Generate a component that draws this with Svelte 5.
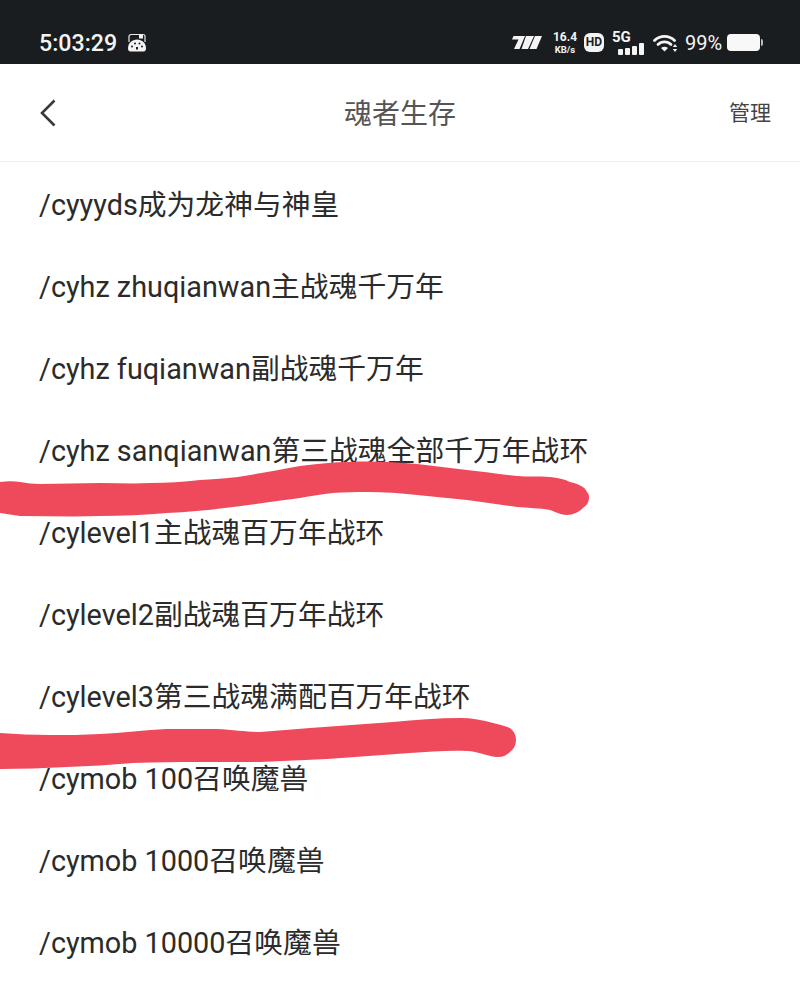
<script>
  const commands = [
    "/cyyyds成为龙神与神皇",
    "/cyhz zhuqianwan主战魂千万年",
    "/cyhz fuqianwan副战魂千万年",
    "/cyhz sanqianwan第三战魂全部千万年战环",
    "/cylevel1主战魂百万年战环",
    "/cylevel2副战魂百万年战环",
    "/cylevel3第三战魂满配百万年战环",
    "/cymob 100召唤魔兽",
    "/cymob 1000召唤魔兽",
    "/cymob 10000召唤魔兽",
  ]
</script>

<div class="screen">
  <div class="status-bar">
    <div class="status-left">
      <span class="clock">5:03:29</span>
      <svg class="dial" viewBox="0 0 20 20" width="20" height="20">
        <path d="M2 9V3.500A2 2 0 0 1 4 1.500H16A2 2 0 0 1 18 3.500V9" fill="none" stroke="#e8e8e8" stroke-width="1.200" />
        <rect x="12" y="1.500" width="4" height="4" fill="#f4f4f4" />
        <path d="M1 15.500C1 10 5 6.500 10 6.500S19 10 19 15.500C19 17.500 18 18.500 16.500 18.500H3.500C2 18.500 1 17.500 1 15.500Z" fill="#f4f4f4" />
        <circle cx="5" cy="13.500" r="1" fill="#1a1d20" />
        <circle cx="8" cy="10.500" r="1" fill="#1a1d20" />
        <circle cx="12.500" cy="10.500" r="1" fill="#1a1d20" />
        <circle cx="15" cy="13.500" r="1" fill="#1a1d20" />
        <rect x="9" y="14" width="2" height="2.500" fill="#1a1d20" />
      </svg>
    </div>
    <div class="status-right">
      <svg class="carrier" viewBox="0 0 30 13" width="30" height="13">
        <path d="M1.500 0H13L7.500 13H2L6.500 3.500H0Z" fill="#f4f4f4" />
        <path d="M14 0H22L16 13H9.500Z" fill="#f4f4f4" />
        <path d="M23 0H30L24.500 13H17.500Z" fill="#f4f4f4" />
      </svg>
      <div class="speed">
        <span class="speed-num">16.4</span>
        <span class="speed-unit">KB/s</span>
      </div>
      <span class="hd">HD</span>
      <div class="signal">
        <span class="five-g">5G</span>
        <div class="bars">
          <i style="height: 6px"></i>
          <i style="height: 7px"></i>
          <i style="height: 9px"></i>
          <i style="height: 12px"></i>
        </div>
      </div>
      <svg class="wifi" viewBox="0 0 25 18" width="25" height="18">
        <path d="M1.500 6.500C7 1 16 1 21.500 6.500" fill="none" stroke="#f4f4f4" stroke-width="2.800" stroke-linecap="round" />
        <path d="M5 10.500C8.500 7 14.500 7 18 10.500" fill="none" stroke="#f4f4f4" stroke-width="2.800" stroke-linecap="round" />
        <path d="M8 14C10 12.200 13 12.200 15 14L11.500 17.500Z" fill="#f4f4f4" />
        <path d="M22 10L24.200 13H19.800ZM22 18L24.200 15H19.800Z" fill="#f4f4f4" />
      </svg>
      <span class="battery-pct">99%</span>
      <div class="battery"><i></i></div>
    </div>
  </div>

  <header class="title-bar">
    <svg class="back" viewBox="0 0 16 28" width="16" height="28">
      <path d="M14.500 1.500L2 14L14.500 26.500" fill="none" stroke="#3a3a3a" stroke-width="2.600" />
    </svg>
    <h1>魂者生存</h1>
    <span class="manage">管理</span>
  </header>

  <ul class="command-list">
    {#each commands as command}
      <li>{command}</li>
    {/each}
  </ul>

  <!-- marker scribbles over the list -->
  <svg class="scribble" viewBox="0 0 800 981" width="800" height="981">
    <path d="M0 482C8 481 14 481 20 482C27 483 33 484 40 484C60 484 80 483 100 483C117 483 134 484 150 483C167 483 184 482 200 480C217 479 234 478 250 475C267 472 284 469 300 466C317 464 334 462 350 462C373 461 395 462 417 464C434 466 450 468 467 470C484 472 500 474 517 476C528 477 539 476 550 477C558 478 564 479 570 482C579 484 585 487 587 492C589 494 589 496 589 498C589 502 587 505 583 508C579 512 573 515 567 515C561 515 556 512 550 510C540 508 528 508 517 507C500 505 484 502 467 500C450 498 434 497 417 495C400 493 384 492 367 492C356 492 344 492 333 493C322 494 311 496 300 498C278 501 256 504 233 507C211 510 189 512 167 513C145 515 122 516 100 516C74 517 47 516 20 516C13 515 7 514 0 513Z" fill="#ee4a5c" />
    <path d="M0 733C17 734 33 735 50 735C67 735 84 735 100 734C122 733 145 730 167 729C184 729 200 729 217 729C234 730 250 732 260 732C277 731 294 729 310 728C338 726 365 724 393 722C415 720 438 718 460 718C472 718 483 720 493 723C500 725 506 726 510 728C514 731 516 735 516 740C516 745 514 749 510 752C507 755 503 757 498 757C488 757 478 751 467 751C448 750 429 752 410 753C382 755 355 757 327 759C305 760 282 761 260 762C240 762 220 762 200 762C178 762 155 762 133 763C111 765 89 766 67 767C45 768 22 769 0 769Z" fill="#ee4a5c" />
  </svg>
</div>

<style>
  :global(body) {
    background: #fff;
  }

  .screen {
    position: relative;
    width: 800px;
    height: 981px;
    overflow: hidden;
    background: #fff;
    font-family: Roboto, "Noto Sans CJK SC", sans-serif;
  }

  .status-bar {
    display: flex;
    justify-content: space-between;
    align-items: center;
    height: 64px;
    box-sizing: border-box;
    padding: 21px 38px 0 39px;
    background: #1a1d20;
    color: #f4f4f4;
  }

  .status-left {
    display: flex;
    align-items: center;
    gap: 10px;
  }

  .clock {
    font-size: 23.2px;
    font-weight: 500;
    line-height: 26px;
  }

  .status-right {
    display: flex;
    align-items: center;
  }

  .carrier {
    margin-right: 11px;
  }

  .speed {
    display: flex;
    flex-direction: column;
    align-items: center;
    width: 24px;
    margin-right: 7px;
    font-weight: 700;
  }

  .speed-num {
    font-size: 12px;
    line-height: 14px;
  }

  .speed-unit {
    font-size: 9.500px;
    line-height: 11px;
  }

  .hd {
    width: 20px;
    height: 19px;
    margin-right: 8px;
    border-radius: 6px;
    background: #f4f4f4;
    color: #1a1d20;
    font-size: 12px;
    font-weight: 700;
    line-height: 19px;
    text-align: center;
  }

  .signal {
    position: relative;
    width: 33px;
    height: 24px;
    margin-right: 8px;
  }

  .five-g {
    position: absolute;
    left: 0;
    top: -2px;
    font-size: 15px;
    font-weight: 700;
    line-height: 16px;
  }

  .bars {
    position: absolute;
    left: 6px;
    bottom: 0;
    display: flex;
    align-items: flex-end;
    gap: 2px;
  }

  .bars i {
    width: 5px;
    border-radius: 1px;
    background: #f4f4f4;
  }

  .wifi {
    margin-right: 7px;
  }

  .battery-pct {
    width: 36px;
    margin-right: 6px;
    font-size: 20px;
    line-height: 24px;
  }

  .battery {
    position: relative;
    width: 33px;
    height: 17px;
    margin-right: 2px;
    border-radius: 4px;
    background: #f8f8f8;
  }

  .battery i {
    position: absolute;
    right: -3px;
    top: 5px;
    width: 2px;
    height: 7px;
    border-radius: 0 2px 2px 0;
    background: #bbb;
  }

  .title-bar {
    position: relative;
    display: flex;
    justify-content: space-between;
    align-items: center;
    height: 98px;
    box-sizing: border-box;
    padding: 0 29px 0 40px;
    border-bottom: 1px solid #eeeeee;
  }

  .title-bar h1 {
    position: absolute;
    left: 0;
    right: 0;
    margin: 0;
    padding-bottom: 2px;
    color: #555;
    font-size: 28px;
    font-weight: 400;
    text-align: center;
  }

  .manage {
    padding-bottom: 3px;
    color: #444;
    font-size: 21px;
  }

  .command-list {
    margin: 0;
    padding: 2px 0 0 39px;
    list-style: none;
  }

  .command-list li {
    height: 82px;
    color: #2b2b2b;
    font-size: 28.8px;
    line-height: 82px;
    white-space: nowrap;
  }

  .scribble {
    position: absolute;
    left: 0;
    top: 0;
    pointer-events: none;
  }
</style>
